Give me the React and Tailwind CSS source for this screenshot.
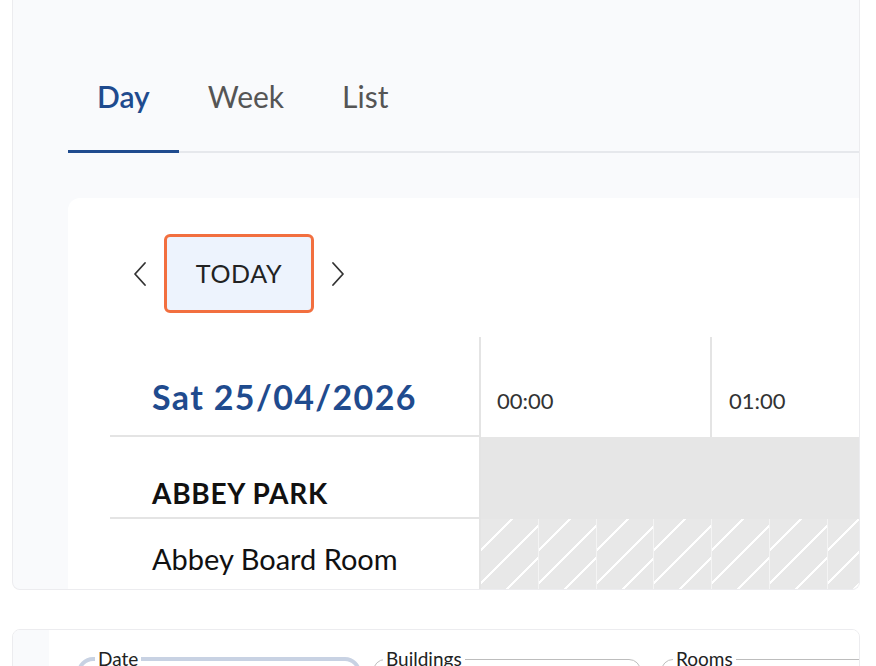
import React from "react";

const hatch =
  "bg-[#e8e8e8] bg-[repeating-linear-gradient(135deg,#e8e8e8_0px,#e8e8e8_21px,#ffffff_21px,#ffffff_23px)]";

const Chevron = ({ dir }) => (
  <svg width="16" height="26" viewBox="0 0 16 26" fill="none">
    <polyline
      points={dir === "left" ? "13,2 3,13 13,24" : "3,2 13,13 3,24"}
      stroke="#333"
      strokeWidth="1.8"
      strokeLinecap="round"
      strokeLinejoin="round"
    />
  </svg>
);

const Tab = ({ label, active }) => (
  <div
    className={`px-[29px] pb-[36px] text-[30px] leading-[36px] -mb-[2px] border-b-[3px] ${
      active
        ? "border-[#1f4b8e] text-[#1f4b8e] font-semibold"
        : "border-transparent text-[#555]"
    }`}
  >
    {label}
  </div>
);

const Field = ({ label, className, legendClass }) => (
  <fieldset className={`h-[60px] shrink-0 ${className}`}>
    <legend className={`px-[3px] text-[19px] leading-[20px] text-[#222] ${legendClass}`}>
      {label}
    </legend>
  </fieldset>
);

export default function App() {
  const quarters = [0, 1, 2, 3, 4, 5, 6];

  return (
    <div
      className="w-[876px] h-[666px] bg-white overflow-hidden"
      style={{ fontFamily: "Lato, 'Open Sans', sans-serif" }}
    >
      {/* top card */}
      <div className="ml-[12px] w-[848px] h-[590px] bg-[#f9fafc] border-x border-b border-[#ececef] rounded-b-lg overflow-hidden flex flex-col">
        <div className="ml-[55px] pt-[78px] flex border-b-2 border-[#e6e8ec]">
          <Tab label="Day" active />
          <Tab label="Week" />
          <Tab label="List" />
        </div>

        <div className="ml-[55px] mt-[45px] flex-1 bg-white rounded-tl-xl overflow-hidden">
          <div className="pl-[64px] pt-[36px] flex items-center gap-[16px]">
            <Chevron dir="left" />
            <button
              type="button"
              className="w-[150px] h-[79px] rounded-md border-[3px] border-[#f26f3f] bg-[#edf3fd] text-[25px] text-[#222] tracking-wide"
            >
              TODAY
            </button>
            <Chevron dir="right" />
          </div>

          <div className="ml-[42px] mt-[24px] w-[831px]">
            {/* header row */}
            <div className="flex h-[100px]">
              <div className="w-[369px] shrink-0 border-b-2 border-[#e4e4e4] pl-[42px] pt-[20px] flex items-center text-[34px] font-bold text-[#1f4b8e] tracking-[0.04em]">
                Sat 25/04/2026
              </div>
              <div className="w-[231px] shrink-0 border-l-2 border-[#e4e4e4] pl-[16px] pt-[26px] flex items-center text-[22px] text-[#333]">
                00:00
              </div>
              <div className="w-[231px] shrink-0 border-l-2 border-[#e4e4e4] pl-[17px] pt-[26px] flex items-center text-[22px] text-[#333]">
                01:00
              </div>
            </div>

            {/* building row */}
            <div className="flex h-[82px]">
              <div className="w-[369px] shrink-0 border-b-2 border-[#e4e4e4] pl-[42px] pt-[32px] flex items-center text-[28px] font-bold text-[#111] tracking-wide">
                ABBEY PARK
              </div>
              <div className="flex-1 bg-[#e6e6e6] border-l-2 border-[#e4e4e4]" />
            </div>

            {/* room row */}
            <div className="flex h-[80px]">
              <div className="w-[369px] shrink-0 pl-[42px] flex items-center text-[29px] text-[#111]">
                Abbey Board Room
              </div>
              <div className="flex-1 flex border-l-2 border-[#e4e4e4]">
                {quarters.map((q) => (
                  <div
                    key={q}
                    className={`w-[57.75px] shrink-0 border-r border-[#f4f4f4] ${hatch}`}
                  />
                ))}
              </div>
            </div>
          </div>
        </div>
      </div>

      {/* filter card */}
      <div className="ml-[12px] mt-[39px] w-[848px] h-[80px] border border-[#ececef] rounded-lg overflow-hidden flex">
        <div className="w-[36px] shrink-0 bg-[#f9fafc]" />
        <div className="flex-1 bg-white flex items-start pl-[28px] pt-[19px] gap-[12px] overflow-hidden">
          <Field
            label="Date"
            className="w-[284px] border-4 border-[#c8d2e3] rounded-2xl"
            legendClass="ml-[14px]"
          />
          <Field
            label="Buildings"
            className="w-[268px] border border-[#bdbdbd] rounded-xl"
            legendClass="ml-[9px]"
          />
          <Field
            label="Rooms"
            className="ml-[8px] w-[240px] border border-[#bdbdbd] rounded-xl"
            legendClass="ml-[11px]"
          />
        </div>
      </div>
    </div>
  );
}
